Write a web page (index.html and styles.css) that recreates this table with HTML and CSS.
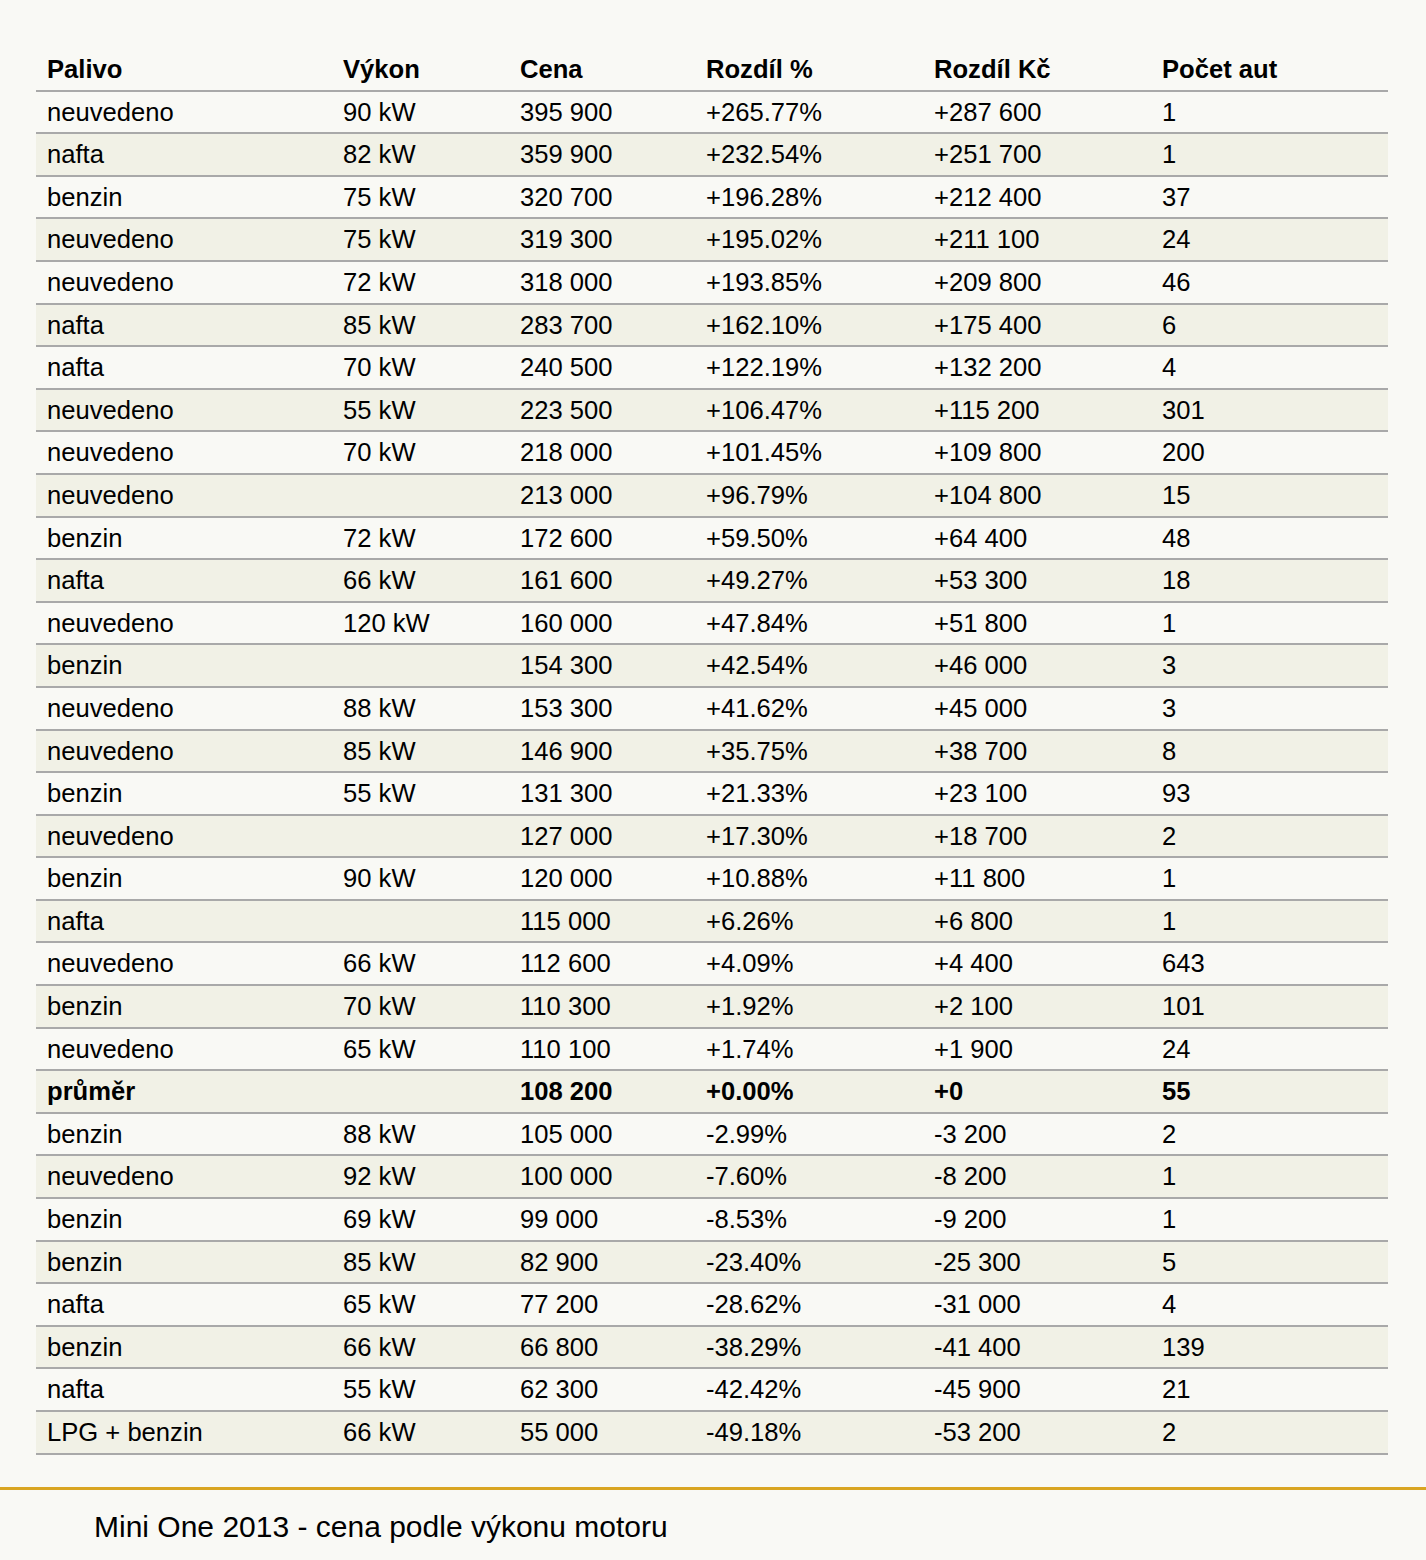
FILE: index.html
```html
<!DOCTYPE html>
<html lang="cs">
<head>
<meta charset="utf-8">
<title>Mini One 2013 - cena podle výkonu motoru</title>
<link rel="stylesheet" href="styles.css">
</head>
<body>
<main class="content">
<table class="prices">
<colgroup>
<col class="c1"><col class="c2"><col class="c3"><col class="c4"><col class="c5"><col class="c6">
</colgroup>
<thead>
<tr><th>Palivo</th><th>Výkon</th><th>Cena</th><th>Rozdíl %</th><th>Rozdíl Kč</th><th>Počet aut</th></tr>
</thead>
<tbody>
<tr><td>neuvedeno</td><td>90 kW</td><td>395 900</td><td>+265.77%</td><td>+287 600</td><td>1</td></tr>
<tr><td>nafta</td><td>82 kW</td><td>359 900</td><td>+232.54%</td><td>+251 700</td><td>1</td></tr>
<tr><td>benzin</td><td>75 kW</td><td>320 700</td><td>+196.28%</td><td>+212 400</td><td>37</td></tr>
<tr><td>neuvedeno</td><td>75 kW</td><td>319 300</td><td>+195.02%</td><td>+211 100</td><td>24</td></tr>
<tr><td>neuvedeno</td><td>72 kW</td><td>318 000</td><td>+193.85%</td><td>+209 800</td><td>46</td></tr>
<tr><td>nafta</td><td>85 kW</td><td>283 700</td><td>+162.10%</td><td>+175 400</td><td>6</td></tr>
<tr><td>nafta</td><td>70 kW</td><td>240 500</td><td>+122.19%</td><td>+132 200</td><td>4</td></tr>
<tr><td>neuvedeno</td><td>55 kW</td><td>223 500</td><td>+106.47%</td><td>+115 200</td><td>301</td></tr>
<tr><td>neuvedeno</td><td>70 kW</td><td>218 000</td><td>+101.45%</td><td>+109 800</td><td>200</td></tr>
<tr><td>neuvedeno</td><td></td><td>213 000</td><td>+96.79%</td><td>+104 800</td><td>15</td></tr>
<tr><td>benzin</td><td>72 kW</td><td>172 600</td><td>+59.50%</td><td>+64 400</td><td>48</td></tr>
<tr><td>nafta</td><td>66 kW</td><td>161 600</td><td>+49.27%</td><td>+53 300</td><td>18</td></tr>
<tr><td>neuvedeno</td><td>120 kW</td><td>160 000</td><td>+47.84%</td><td>+51 800</td><td>1</td></tr>
<tr><td>benzin</td><td></td><td>154 300</td><td>+42.54%</td><td>+46 000</td><td>3</td></tr>
<tr><td>neuvedeno</td><td>88 kW</td><td>153 300</td><td>+41.62%</td><td>+45 000</td><td>3</td></tr>
<tr><td>neuvedeno</td><td>85 kW</td><td>146 900</td><td>+35.75%</td><td>+38 700</td><td>8</td></tr>
<tr><td>benzin</td><td>55 kW</td><td>131 300</td><td>+21.33%</td><td>+23 100</td><td>93</td></tr>
<tr><td>neuvedeno</td><td></td><td>127 000</td><td>+17.30%</td><td>+18 700</td><td>2</td></tr>
<tr><td>benzin</td><td>90 kW</td><td>120 000</td><td>+10.88%</td><td>+11 800</td><td>1</td></tr>
<tr><td>nafta</td><td></td><td>115 000</td><td>+6.26%</td><td>+6 800</td><td>1</td></tr>
<tr><td>neuvedeno</td><td>66 kW</td><td>112 600</td><td>+4.09%</td><td>+4 400</td><td>643</td></tr>
<tr><td>benzin</td><td>70 kW</td><td>110 300</td><td>+1.92%</td><td>+2 100</td><td>101</td></tr>
<tr><td>neuvedeno</td><td>65 kW</td><td>110 100</td><td>+1.74%</td><td>+1 900</td><td>24</td></tr>
<tr class="avg"><td>průměr</td><td></td><td>108 200</td><td>+0.00%</td><td>+0</td><td>55</td></tr>
<tr><td>benzin</td><td>88 kW</td><td>105 000</td><td>-2.99%</td><td>-3 200</td><td>2</td></tr>
<tr><td>neuvedeno</td><td>92 kW</td><td>100 000</td><td>-7.60%</td><td>-8 200</td><td>1</td></tr>
<tr><td>benzin</td><td>69 kW</td><td>99 000</td><td>-8.53%</td><td>-9 200</td><td>1</td></tr>
<tr><td>benzin</td><td>85 kW</td><td>82 900</td><td>-23.40%</td><td>-25 300</td><td>5</td></tr>
<tr><td>nafta</td><td>65 kW</td><td>77 200</td><td>-28.62%</td><td>-31 000</td><td>4</td></tr>
<tr><td>benzin</td><td>66 kW</td><td>66 800</td><td>-38.29%</td><td>-41 400</td><td>139</td></tr>
<tr><td>nafta</td><td>55 kW</td><td>62 300</td><td>-42.42%</td><td>-45 900</td><td>21</td></tr>
<tr><td>LPG + benzin</td><td>66 kW</td><td>55 000</td><td>-49.18%</td><td>-53 200</td><td>2</td></tr>
</tbody>
</table>
</main>
<footer class="caption">Mini One 2013 - cena podle výkonu motoru</footer>
</body>
</html>
```

FILE: styles.css
```css
html, body {
  margin: 0;
  padding: 0;
  background: #f9f9f5;
  color: #000;
  font-family: "Liberation Sans", Arial, sans-serif;
}

.content {
  padding: 49px 38px 0 36px;
}

.prices {
  width: 1352px;
  border-collapse: collapse;
  table-layout: fixed;
  font-size: 25.6px;
}

.c1 { width: 296px; }
.c2 { width: 177px; }
.c3 { width: 186px; }
.c4 { width: 228px; }
.c5 { width: 228px; }
.c6 { width: 237px; }

.prices th,
.prices td {
  text-align: left;
  padding: 6px 11px;
  line-height: 28.6px;
  border-bottom: 2px solid #a9a9a9;
  white-space: nowrap;
}

.prices th {
  font-weight: bold;
}

.prices tbody tr:nth-child(even) {
  background: #f1f1e6;
}

.prices tr.avg td {
  font-weight: bold;
}

.caption {
  margin-top: 32px;
  border-top: 3px solid #d9a521;
  padding: 20px 0 15px 94px;
  font-size: 30px;
  line-height: 34px;
}
```
